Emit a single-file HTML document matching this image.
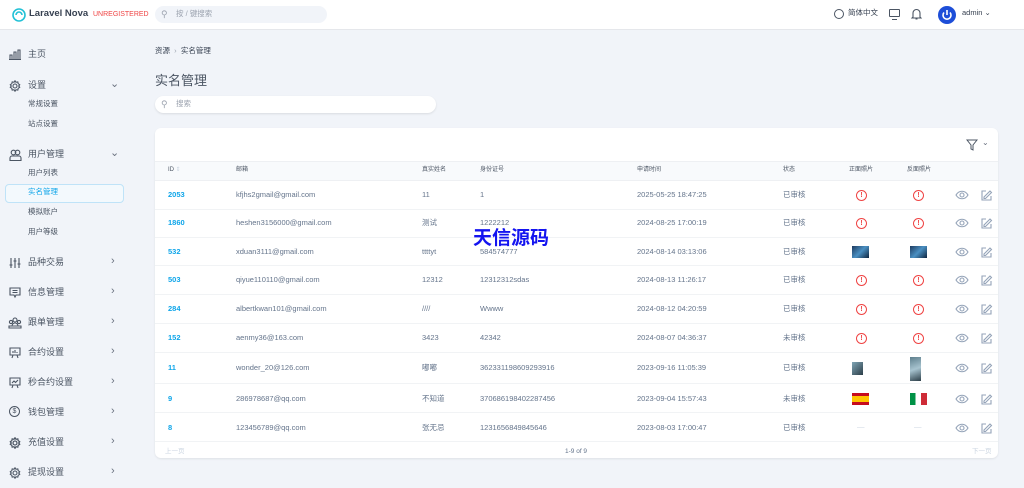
<!DOCTYPE html><html><head><meta charset="utf-8"><style>
*{box-sizing:border-box;margin:0;padding:0;line-height:1.15}
body{width:1024px;height:488px;overflow:hidden;background:#f1f4f9;font-family:"Liberation Sans","Noto Sans CJK SC",sans-serif;color:#4b5563;position:relative}
.hdr{position:absolute;left:0;top:0;width:1024px;height:30px;background:#fff;border-bottom:1px solid #e5e7eb}
.a{position:absolute;white-space:nowrap}
.side{font-size:9px;color:#4b5563}
.sub{font-size:7.5px;color:#4b5563}
.chev{font-size:11px;color:#6b7280}
.card{position:absolute;left:155px;top:128px;width:843px;height:330px;background:#fff;border-radius:6px;box-shadow:0 1px 2px rgba(0,0,0,.08)}
.th{position:absolute;left:155px;top:161px;width:843px;height:20px;background:#f8fafc;border-top:1px solid #eef0f3;border-bottom:1px solid #eef0f3}
.row{position:absolute;left:155px;width:843px;border-bottom:1px solid #f1f3f5}
.c{position:absolute;font-size:7.5px;color:#64748b;white-space:nowrap}
.id{color:#0ea5e9;font-weight:bold}
.h{font-size:6px;color:#4b5563}
.warn{position:absolute;width:11px;height:11px;border:1.4px solid #ef4444;border-radius:50%;color:#ef4444;font-size:7px;font-weight:bold;text-align:center;line-height:9px}
svg.i{position:absolute;fill:none;stroke:#4b5563;stroke-width:1.1}
</style></head><body>
<div class="hdr"></div>
<svg class="a" style="left:12px;top:8px" width="14" height="14" viewBox="0 0 14 14"><circle cx="7" cy="7" r="6" fill="none" stroke="#22c1d6" stroke-width="1.6"/><path d="M4 7a3 3 0 0 1 6 0" fill="none" stroke="#22c1d6" stroke-width="1.6"/></svg>
<div class="a" style="left:29px;top:9px;font-size:9.5px;font-weight:bold;color:#374151">Laravel Nova</div>
<div class="a" style="left:93px;top:11px;font-size:7px;color:#ef4444">UNREGISTERED</div>
<div class="a" style="left:155px;top:6px;width:172px;height:17px;background:#f1f4f9;border-radius:9px"></div>
<div class="a" style="left:161px;top:9px;font-size:9px;color:#9ca3af">⚲</div>
<div class="a" style="left:176px;top:10px;font-size:7.5px;color:#9ca3af">按 / 键搜索</div>
<div class="a" style="left:834px;top:9px;width:10px;height:10px;border:1.3px solid #4b5563;border-radius:50%"></div>
<div class="a" style="left:848px;top:9px;font-size:7.5px;color:#374151">简体中文</div>
<div class="a" style="left:889px;top:9px;width:11px;height:8px;border:1.3px solid #4b5563;border-radius:1px"></div>
<div class="a" style="left:892px;top:17px;width:5px;height:3px;border-bottom:1.3px solid #4b5563"></div>
<svg class="a" style="left:911px;top:8px" width="11" height="12" viewBox="0 0 11 12"><path d="M2 9V5a3.5 3.5 0 0 1 7 0v4l1 1H1z M4.5 11h2" fill="none" stroke="#4b5563" stroke-width="1.1"/></svg>
<svg class="a" style="left:938px;top:6px" width="18" height="18" viewBox="0 0 18 18"><circle cx="9" cy="9" r="9" fill="#1d4ed8"/><path d="M6 6.5a4 4 0 1 0 6 0M9 4v5" fill="none" stroke="#fff" stroke-width="1.6"/></svg>
<div class="a" style="left:962px;top:9px;font-size:7.5px;color:#374151">admin ⌄</div>

<!-- sidebar -->
<svg class="i" style="left:9px;top:49px" width="12" height="11" viewBox="0 0 12 11"><path d="M1 10V6h2v4M5 10V3h2v7M9 10V1h2v9M0 10.5h12"/></svg>
<div class="a side" style="left:28px;top:49px">主页</div>
<svg class="i" style="left:9px;top:80px" width="12" height="12" viewBox="0 0 12 12" id="g"><circle cx="6" cy="6" r="2"/><path d="M6 .8l1 1.5 1.8-.4.4 1.8 1.5 1-1 1.3 1 1.3-1.5 1-.4 1.8-1.8-.4-1 1.5-1-1.5-1.8.4-.4-1.8-1.5-1 1-1.3-1-1.3 1.5-1 .4-1.8 1.8.4z"/></svg>
<div class="a side" style="left:28px;top:80px">设置</div><div class="a chev" style="left:110px;top:78px">⌄</div>
<div class="a sub" style="left:28px;top:100px">常规设置</div>
<div class="a sub" style="left:28px;top:120px">站点设置</div>
<svg class="i" style="left:9px;top:149px" width="13" height="12" viewBox="0 0 13 12"><circle cx="4.5" cy="3.5" r="2.3"/><circle cx="8.5" cy="3.5" r="2.3"/><path d="M1 11.5V9a2 2 0 0 1 2-2h7a2 2 0 0 1 2 2v2.5z"/></svg>
<div class="a side" style="left:28px;top:149px">用户管理</div><div class="a chev" style="left:110px;top:147px">⌄</div>
<div class="a sub" style="left:28px;top:169px">用户列表</div>
<div class="a" style="left:5px;top:184px;width:119px;height:19px;border:1.5px solid #bfe3f8;border-radius:4px;background:#f3f9fd"></div>
<div class="a sub" style="left:28px;top:188px;color:#0ea5e9">实名管理</div>
<div class="a sub" style="left:28px;top:208px">模拟账户</div>
<div class="a sub" style="left:28px;top:228px">用户等级</div>
<svg class="i" style="left:9px;top:257px" width="12" height="12" viewBox="0 0 12 12"><path d="M2 1v10M6 1v10M10 1v10M.5 8h3M4.5 4h3M8.5 7h3"/></svg><div class="a side" style="left:28px;top:257px">品种交易</div><div class="a chev" style="left:111px;top:255px">›</div>
<svg class="i" style="left:9px;top:287px" width="12" height="12" viewBox="0 0 12 12"><path d="M1 1h10v7H7l-1 2-1-2H1zM3.5 3.5h5M3.5 5.5h5"/></svg><div class="a side" style="left:28px;top:287px">信息管理</div><div class="a chev" style="left:111px;top:285px">›</div>
<svg class="i" style="left:8px;top:317px" width="14" height="12" viewBox="0 0 14 12"><circle cx="7" cy="3" r="2"/><circle cx="3" cy="5" r="1.6"/><circle cx="11" cy="5" r="1.6"/><path d="M1 11V9h12v2zM4 9a3 3 0 0 1 6 0"/></svg><div class="a side" style="left:28px;top:317px">跟单管理</div><div class="a chev" style="left:111px;top:315px">›</div>
<svg class="i" style="left:9px;top:347px" width="12" height="12" viewBox="0 0 12 12"><path d="M1 1h10v7H1zM4 8l-1 3M8 8l1 3M4 6V4M6 6V3M8 6V5"/></svg><div class="a side" style="left:28px;top:347px">合约设置</div><div class="a chev" style="left:111px;top:345px">›</div>
<svg class="i" style="left:9px;top:377px" width="12" height="12" viewBox="0 0 12 12"><path d="M1 1h10v7H1zM4 8l-1 3M8 8l1 3M3 6l2-2 1.5 1.5L9 3"/></svg><div class="a side" style="left:28px;top:377px">秒合约设置</div><div class="a chev" style="left:111px;top:375px">›</div>
<div class="a" style="left:9px;top:406px;width:11px;height:11px;border:1.3px solid #4b5563;border-radius:50%;font-size:7px;text-align:center;line-height:9px">$</div><div class="a side" style="left:28px;top:407px">钱包管理</div><div class="a chev" style="left:111px;top:405px">›</div>
<svg class="i" style="left:9px;top:437px" width="12" height="12" viewBox="0 0 12 12"><use href="#g"/><circle cx="6" cy="6" r="2"/><path d="M6 .8l1 1.5 1.8-.4.4 1.8 1.5 1-1 1.3 1 1.3-1.5 1-.4 1.8-1.8-.4-1 1.5-1-1.5-1.8.4-.4-1.8-1.5-1 1-1.3-1-1.3 1.5-1 .4-1.8 1.8.4z"/></svg><div class="a side" style="left:28px;top:437px">充值设置</div><div class="a chev" style="left:111px;top:435px">›</div>
<svg class="i" style="left:9px;top:467px" width="12" height="12" viewBox="0 0 12 12"><circle cx="6" cy="6" r="2"/><path d="M6 .8l1 1.5 1.8-.4.4 1.8 1.5 1-1 1.3 1 1.3-1.5 1-.4 1.8-1.8-.4-1 1.5-1-1.5-1.8.4-.4-1.8-1.5-1 1-1.3-1-1.3 1.5-1 .4-1.8 1.8.4z"/></svg><div class="a side" style="left:28px;top:467px">提现设置</div><div class="a chev" style="left:111px;top:465px">›</div>

<!-- main -->
<div class="a" style="left:155px;top:47px;font-size:7.5px;color:#374151">资源 &nbsp;<span style="color:#9ca3af">›</span>&nbsp; 实名管理</div>
<div class="a" style="left:155px;top:74px;font-size:13px;color:#4b5563">实名管理</div>
<div class="a" style="left:155px;top:96px;width:281px;height:17px;background:#fff;border-radius:9px;box-shadow:0 1px 2px rgba(0,0,0,.1)"></div>
<div class="a" style="left:161px;top:99px;font-size:9px;color:#9ca3af">⚲</div>
<div class="a" style="left:176px;top:100px;font-size:7.5px;color:#9ca3af">搜索</div>
<div class="card"></div>
<svg class="a" style="left:966px;top:139px" width="12" height="12" viewBox="0 0 12 12"><path d="M1 1h10L7 6v5L5 10V6z" fill="none" stroke="#4b5563" stroke-width="1"/></svg>
<div class="a" style="left:982px;top:138px;font-size:8px;color:#6b7280">⌄</div>
<div class="th"></div>
<div class="a h" style="left:168px;top:167px">ID <span style="color:#cbd5e1">⇕</span></div>
<div class="a h" style="left:236px;top:167px">邮箱</div>
<div class="a h" style="left:422px;top:167px">真实姓名</div>
<div class="a h" style="left:480px;top:167px">身份证号</div>
<div class="a h" style="left:637px;top:167px">申请时间</div>
<div class="a h" style="left:783px;top:167px">状态</div>
<div class="a h" style="left:849px;top:167px">正面照片</div>
<div class="a h" style="left:907px;top:167px">反面照片</div>

<div class="row" style="top:181px;height:29px"></div>
<div class="row" style="top:210px;height:28px"></div>
<div class="row" style="top:238px;height:28px"></div>
<div class="row" style="top:266px;height:29px"></div>
<div class="row" style="top:295px;height:29px"></div>
<div class="row" style="top:324px;height:29px"></div>
<div class="row" style="top:353px;height:31px"></div>
<div class="row" style="top:384px;height:29px"></div>
<div class="row" style="top:413px;height:29px"></div>

<div class="c id" style="left:168px;top:191px">2053</div><div class="c" style="left:236px;top:191px">kfjhs2gmail@gmail.com</div><div class="c" style="left:422px;top:191px">11</div><div class="c" style="left:480px;top:191px">1</div><div class="c" style="left:637px;top:191px">2025-05-25 18:47:25</div><div class="c" style="left:783px;top:191px">已审核</div>
<div class="c id" style="left:168px;top:219px">1860</div><div class="c" style="left:236px;top:219px">heshen3156000@gmail.com</div><div class="c" style="left:422px;top:219px">测试</div><div class="c" style="left:480px;top:219px">1222212</div><div class="c" style="left:637px;top:219px">2024-08-25 17:00:19</div><div class="c" style="left:783px;top:219px">已审核</div>
<div class="c id" style="left:168px;top:248px">532</div><div class="c" style="left:236px;top:248px">xduan3111@gmail.com</div><div class="c" style="left:422px;top:248px">ttttyt</div><div class="c" style="left:480px;top:248px">584574777</div><div class="c" style="left:637px;top:248px">2024-08-14 03:13:06</div><div class="c" style="left:783px;top:248px">已审核</div>
<div class="c id" style="left:168px;top:276px">503</div><div class="c" style="left:236px;top:276px">qiyue110110@gmail.com</div><div class="c" style="left:422px;top:276px">12312</div><div class="c" style="left:480px;top:276px">12312312sdas</div><div class="c" style="left:637px;top:276px">2024-08-13 11:26:17</div><div class="c" style="left:783px;top:276px">已审核</div>
<div class="c id" style="left:168px;top:305px">284</div><div class="c" style="left:236px;top:305px">albertkwan101@gmail.com</div><div class="c" style="left:422px;top:305px">////</div><div class="c" style="left:480px;top:305px">Wwww</div><div class="c" style="left:637px;top:305px">2024-08-12 04:20:59</div><div class="c" style="left:783px;top:305px">已审核</div>
<div class="c id" style="left:168px;top:334px">152</div><div class="c" style="left:236px;top:334px">aenmy36@163.com</div><div class="c" style="left:422px;top:334px">3423</div><div class="c" style="left:480px;top:334px">42342</div><div class="c" style="left:637px;top:334px">2024-08-07 04:36:37</div><div class="c" style="left:783px;top:334px">未审核</div>
<div class="c id" style="left:168px;top:364px">11</div><div class="c" style="left:236px;top:364px">wonder_20@126.com</div><div class="c" style="left:422px;top:364px">嘟嘟</div><div class="c" style="left:480px;top:364px">362331198609293916</div><div class="c" style="left:637px;top:364px">2023-09-16 11:05:39</div><div class="c" style="left:783px;top:364px">已审核</div>
<div class="c id" style="left:168px;top:395px">9</div><div class="c" style="left:236px;top:395px">286978687@qq.com</div><div class="c" style="left:422px;top:395px">不知道</div><div class="c" style="left:480px;top:395px">370686198402287456</div><div class="c" style="left:637px;top:395px">2023-09-04 15:57:43</div><div class="c" style="left:783px;top:395px">未审核</div>
<div class="c id" style="left:168px;top:424px">8</div><div class="c" style="left:236px;top:424px">123456789@qq.com</div><div class="c" style="left:422px;top:424px">张无忌</div><div class="c" style="left:480px;top:424px">1231656849845646</div><div class="c" style="left:637px;top:424px">2023-08-03 17:00:47</div><div class="c" style="left:783px;top:424px">已审核</div>

<div class="warn" style="left:856px;top:190px">!</div><div class="warn" style="left:913px;top:190px">!</div>
<div class="warn" style="left:856px;top:218px">!</div><div class="warn" style="left:913px;top:218px">!</div>
<div class="a" style="left:852px;top:246px;width:17px;height:12px;background:linear-gradient(135deg,#1e3a5f,#4a90c2,#0f2540)"></div>
<div class="a" style="left:910px;top:246px;width:17px;height:12px;background:linear-gradient(135deg,#1e3a5f,#4a90c2,#0f2540)"></div>
<div class="warn" style="left:856px;top:275px">!</div><div class="warn" style="left:913px;top:275px">!</div>
<div class="warn" style="left:856px;top:304px">!</div><div class="warn" style="left:913px;top:304px">!</div>
<div class="warn" style="left:856px;top:333px">!</div><div class="warn" style="left:913px;top:333px">!</div>
<div class="a" style="left:852px;top:362px;width:11px;height:13px;background:linear-gradient(135deg,#7fa5b5,#2c3e48)"></div>
<div class="a" style="left:910px;top:357px;width:11px;height:24px;background:linear-gradient(160deg,#5d7e8c,#a8c4d0,#2c3e48)"></div>
<div class="a" style="left:852px;top:393px;width:17px;height:12px;background:linear-gradient(#c60b1e 25%,#ffc400 25%,#ffc400 75%,#c60b1e 75%)"></div>
<div class="a" style="left:910px;top:393px;width:17px;height:12px;background:linear-gradient(90deg,#009246 33%,#fff 33%,#fff 66%,#ce2b37 66%)"></div>
<div class="c" style="left:857px;top:423px;color:#cbd5e1">—</div><div class="c" style="left:914px;top:423px;color:#cbd5e1">—</div>

<svg class="a" style="left:955px;top:186px" width="45" height="250" viewBox="0 0 45 250">
<g fill="none" stroke="#94a3b8" stroke-width="1.1">
<g id="e"><path d="M1 9c3-5 9-5 12 0c-3 5-9 5-12 0z"/><circle cx="7" cy="9" r="2"/><path d="M31 5h-4v9h9v-4M29 11l6-6 1.5 1.5-6 6h-1.5z"/></g>
<use href="#e" y="28"/><use href="#e" y="57"/><use href="#e" y="85"/><use href="#e" y="114"/><use href="#e" y="143"/><use href="#e" y="173"/><use href="#e" y="204"/><use href="#e" y="233"/>
</g></svg>

<div class="a" style="left:165px;top:448px;font-size:6.5px;color:#cbd5e1">上一页</div>
<div class="a" style="left:565px;top:448px;font-size:6.5px;color:#64748b">1-9 of 9</div>
<div class="a" style="left:972px;top:448px;font-size:6.5px;color:#cbd5e1">下一页</div>
<div class="a" style="left:473px;top:226px;font-size:19px;font-weight:bold;color:#1414f0;font-family:'Noto Sans CJK SC',sans-serif">天信源码</div>
</body></html>
